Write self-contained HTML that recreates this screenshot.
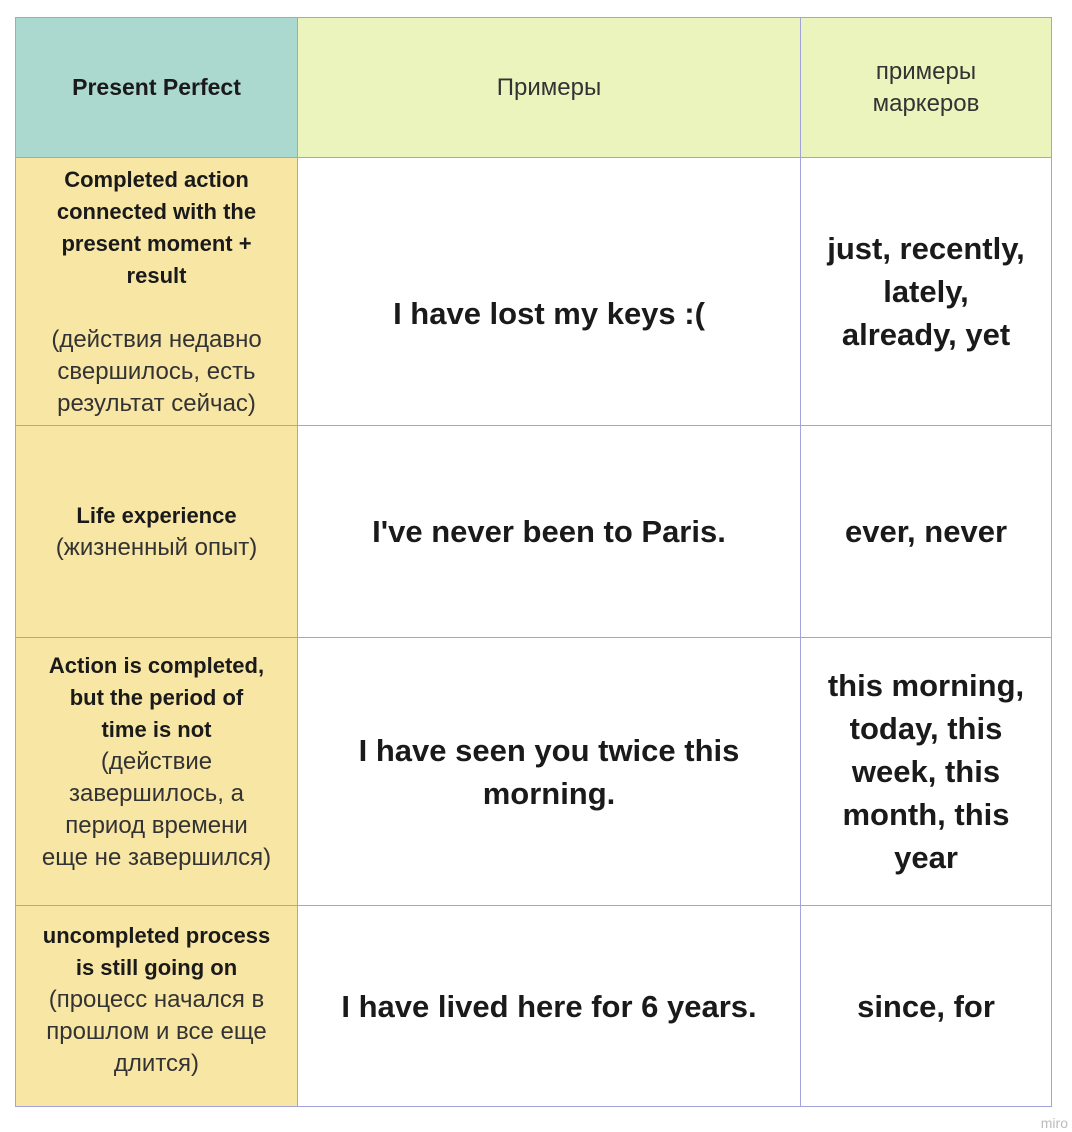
<!DOCTYPE html>
<html><head><meta charset="utf-8"><style>
body{margin:0;width:1072px;height:1132px;background:#fff;position:relative;font-family:"Liberation Sans",sans-serif;color:#1a1a1a;overflow:hidden}
.c{position:absolute;box-sizing:border-box;border:1px solid #a3a3dc;display:flex;align-items:center;justify-content:center;text-align:center;flex-direction:column;white-space:nowrap}
.h{font-size:24px;line-height:32px;color:#333}
.l{font-size:22px;line-height:32px;padding:0 2px}
.l b{font-weight:bold}
.l span{font-size:24px;color:#333}
.m{font-size:31px;font-weight:bold;line-height:43px}
.r{font-size:31px;font-weight:bold;line-height:43px}
</style></head><body>
<div class="c" style="left:15px;top:17px;width:283px;height:141px;background:#abd9d0"><b style="font-size:23px">Present Perfect</b></div>
<div class="c h" style="left:297px;top:17px;width:504px;height:141px;background:#ecf4be">Примеры</div>
<div class="c h" style="left:800px;top:17px;width:252px;height:141px;background:#ecf4be">примеры<br>маркеров</div>

<div class="c l" style="left:15px;top:157px;width:283px;height:269px;background:#f8e6a4"><div><b>Completed action<br>connected with the<br>present moment +<br>result</b><br><br><span>(действия недавно<br>свершилось, есть<br>результат сейчас)</span></div></div>
<div class="c m" style="left:297px;top:157px;width:504px;height:269px;padding-top:44px">I have lost my keys :(</div>
<div class="c r" style="left:800px;top:157px;width:252px;height:269px">just, recently,<br>lately,<br>already, yet</div>

<div class="c l" style="left:15px;top:425px;width:283px;height:213px;background:#f8e6a4"><div><b>Life experience</b><br><span>(жизненный опыт)</span></div></div>
<div class="c m" style="left:297px;top:425px;width:504px;height:213px">I've never been to Paris.</div>
<div class="c r" style="left:800px;top:425px;width:252px;height:213px">ever, never</div>

<div class="c l" style="left:15px;top:637px;width:283px;height:269px;background:#f8e6a4"><div style="margin-top:-20px"><b>Action is completed,<br>but the period of<br>time is not</b><br><span>(действие<br>завершилось, а<br>период времени<br>еще не завершился)</span></div></div>
<div class="c m" style="left:297px;top:637px;width:504px;height:269px">I have seen you twice this<br>morning.</div>
<div class="c r" style="left:800px;top:637px;width:252px;height:269px">this morning,<br>today, this<br>week, this<br>month, this<br>year</div>

<div class="c l" style="left:15px;top:905px;width:283px;height:202px;background:#f8e6a4"><div style="margin-top:-12px"><b>uncompleted process<br>is still going on</b><br><span>(процесс начался в<br>прошлом и все еще<br>длится)</span></div></div>
<div class="c m" style="left:297px;top:905px;width:504px;height:202px">I have lived here for 6 years.</div>
<div class="c r" style="left:800px;top:905px;width:252px;height:202px">since, for</div>
<div style="position:absolute;right:4px;top:1115px;font-size:14px;color:#bbb">miro</div>
</body></html>
